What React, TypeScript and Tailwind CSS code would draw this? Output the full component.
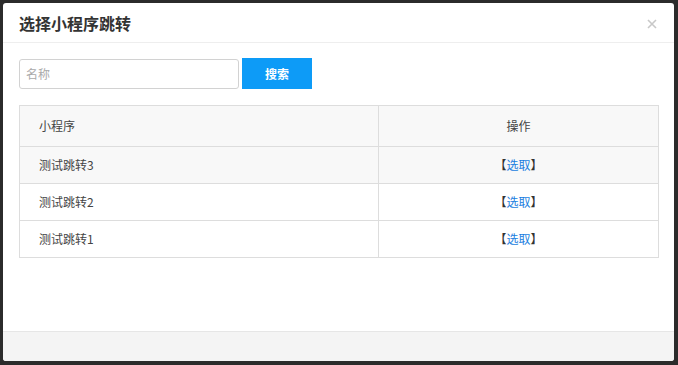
import React from "react";

const rows = ["测试跳转3", "测试跳转2", "测试跳转1"];

export default function App() {
  return (
    <div
      className="w-[678px] h-[365px] bg-[#2b2b2b] pt-[3px] pl-[3px]"
      style={{ fontFamily: '"Noto Sans CJK SC", "Noto Sans", sans-serif' }}
    >
      <div className="w-[671px] h-[358px] bg-white rounded-[3px] flex flex-col overflow-hidden">
        <div className="h-[40px] border-b border-[#eeeeee] flex items-center justify-between pl-[16px] pr-[17px] shrink-0">
          <span className="text-[16px] font-bold text-[#333333] leading-none">选择小程序跳转</span>
          <svg width="10" height="10" viewBox="0 0 10 10" className="mt-[2px]">
            <path d="M1 1L9 9M9 1L1 9" stroke="#c8c8c8" strokeWidth="1.6" />
          </svg>
        </div>
        <div className="flex-1 px-[16px] pt-[15px]">
          <div className="flex items-center gap-[3px]">
            <div className="w-[220px] h-[30px] border border-[#d2d2d2] rounded-[3px] flex items-center pl-[6px] text-[12px] text-[#aaaaaa]">
              名称
            </div>
            <button className="w-[70px] h-[31px] bg-[#0d9bf7] text-white text-[12px] font-bold flex items-center justify-center">
              搜索
            </button>
          </div>
          <div className="mt-[16px] w-[640px] border border-[#dddddd] text-[12px] text-[#444444]">
            <div className="flex h-[41px] bg-[#f8f8f8] border-b border-[#dddddd]">
              <div className="w-[359px] border-r border-[#dddddd] flex items-center pl-[19px]">小程序</div>
              <div className="flex-1 flex items-center justify-center">操作</div>
            </div>
            {rows.map((r, i) => (
              <div
                key={r}
                className={`flex ${i < rows.length - 1 ? "h-[37px] border-b border-[#dddddd]" : "h-[36px]"} ${i === 0 ? "bg-[#f8f8f8]" : "bg-white"}`}
              >
                <div className="w-[359px] border-r border-[#dddddd] flex items-center pl-[19px]">{r}</div>
                <div className="flex-1 flex items-center justify-center">
                  <span className="text-[#333333]">【</span>
                  <span className="text-[#1a7ee0]">选取</span>
                  <span className="text-[#333333]">】</span>
                </div>
              </div>
            ))}
          </div>
        </div>
        <div className="h-[30px] bg-[#f4f4f4] border-t border-[#e6e6e6] shrink-0" />
      </div>
    </div>
  );
}
